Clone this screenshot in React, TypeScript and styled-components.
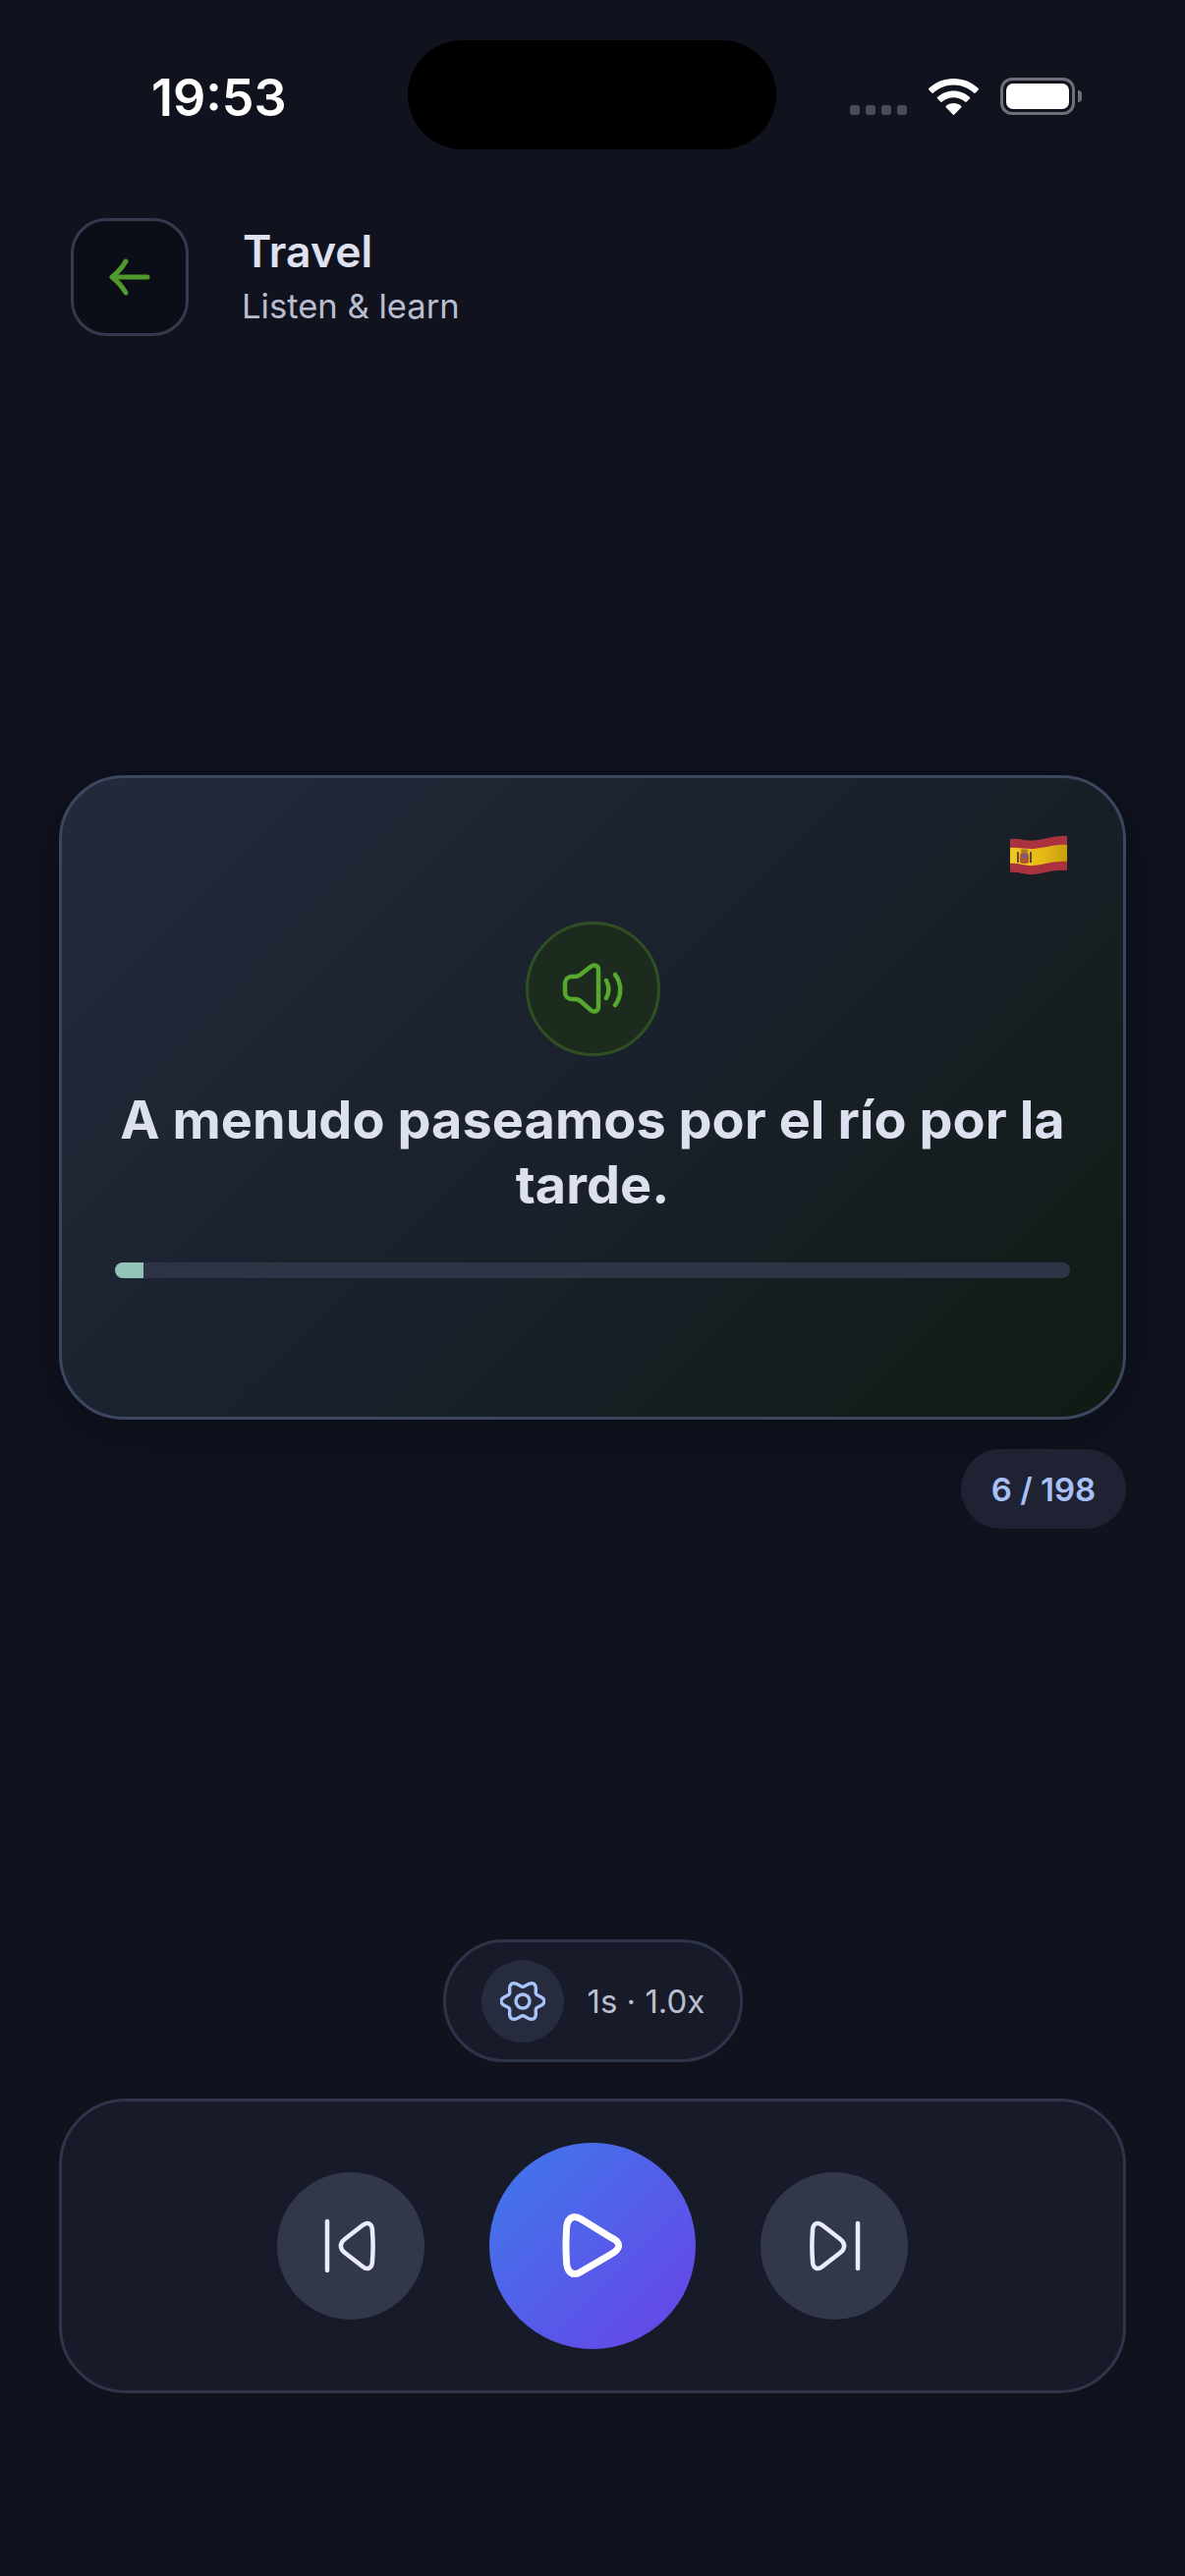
import { createGlobalStyle, styled } from "styled-components";

const GlobalStyle = createGlobalStyle`
  html, body {
    margin: 0;
    padding: 0;
    background: #10131e;
  }
  * { box-sizing: border-box; }
`;

const total = 198;
const current = 6;

// six soft lobes, a bit wider than tall
const gearPath =
  Array.from({ length: 144 }, (_, i) => {
    const a = (i / 144) * Math.PI * 2;
    const r = 18 + 3 * Math.cos(6 * a);
    const x = 23 + r * 1.05 * Math.cos(a);
    const y = 21 + r * 0.98 * Math.sin(a);
    return `${i === 0 ? "M" : "L"}${x.toFixed(2)} ${y.toFixed(2)}`;
  }).join(" ") + " Z";

export default function App() {
  return (
    <Screen>
      <GlobalStyle />
      <StatusBar>
        <Time>19:53</Time>
        <Island />
        <StatusIcons>
          <SignalDots>
            <Dot /><Dot /><Dot /><Dot />
          </SignalDots>
          <svg width="51" height="37" viewBox="0 0 51 37">
            <path fill="#fff" d="M25.5 0C15.8 0 7 3.7.4 9.8c-.5.5-.5 1.200 0 1.700l2.900 3c.5.5 1.200.5 1.700 0C10.400 9.500 17.600 6.500 25.500 6.500s15.100 3 20.500 8c.5.5 1.200.5 1.700 0l2.900-3c.5-.5.5-1.200 0-1.700C44 3.700 35.200 0 25.500 0Z" />
            <path fill="#fff" d="M25.500 12.500c-6.300 0-12 2.400-16.300 6.300-.5.5-.5 1.200 0 1.700l3 3c.5.5 1.200.5 1.700.1 3.100-2.700 7.200-4.400 11.600-4.400s8.500 1.700 11.600 4.400c.5.4 1.200.4 1.700-.1l3-3c.5-.5.5-1.200 0-1.700-4.300-3.900-10-6.300-16.300-6.300Z" />
            <path fill="#fff" d="M25.500 25c-2.900 0-5.500 1-7.600 2.800-.5.4-.5 1.100 0 1.600l6.800 7.200c.4.500 1.200.5 1.600 0l6.800-7.200c.5-.5.5-1.200 0-1.600-2.100-1.800-4.700-2.800-7.600-2.800Z" />
          </svg>
          <Battery>
            <BatteryLevel />
          </Battery>
        </StatusIcons>
      </StatusBar>

      <Header>
        <BackButton aria-label="Back">
          <svg width="42" height="38" viewBox="0 0 42 38" fill="none" stroke="#4f9a2c" strokeWidth="5" strokeLinecap="round" strokeLinejoin="round">
            <path d="M17 3C13 10 8 15 3 19c5 4 10 9 14 16" />
            <path d="M4 19h35" />
          </svg>
        </BackButton>
        <HeaderText>
          <Title>Travel</Title>
          <Subtitle>Listen &amp; learn</Subtitle>
        </HeaderText>
      </Header>

      <Card>
        <FlagRow>
          <svg width="58" height="42" viewBox="0 0 58 42">
            <defs>
              <linearGradient id="flagGold" x1="0" y1="0" x2="1" y2="0">
                <stop offset="0" stopColor="#efc622" />
                <stop offset="0.55" stopColor="#e6bb18" />
                <stop offset="1" stopColor="#c99d0c" />
              </linearGradient>
            </defs>
            <path fill="#a9323e" d="M0 4C8 3 16 6 24 5.500 34 5 46 0 58 1V36C46 35 34 39 24 40 16 41 8 37 0 38Z" />
            <path fill="url(#flagGold)" d="M0 13C8 12 16 14.500 24 14 34 13.500 46 9 58 10V27C46 26 34 30 24 31 16 32 8 28 0 29Z" />
            <rect x="7" y="17" width="2" height="11" fill="#5a4a38" />
            <rect x="20" y="17" width="2" height="11" fill="#5a4a38" />
            <rect x="10" y="18" width="9" height="11" rx="3" fill="#b2562a" />
            <rect x="12" y="19" width="5" height="5" rx="2" fill="#7c5a8e" />
            <rect x="11" y="14.500" width="7" height="3.500" rx="1" fill="#a67b26" />
          </svg>
        </FlagRow>
        <SoundBadge>
          <svg width="66" height="54" viewBox="0 0 66 54" fill="none" stroke="#56a82e" strokeWidth="4.500" strokeLinecap="round" strokeLinejoin="round">
            <path d="M5 21c0-4 3-7 7-7h3c3 0 5-1 7-3l9-7c4-3 8-1 8 3v38c0 4-4 6-8 3l-9-8c-2-2-4-3-7-3h-3c-4 0-7-3-7-7Z" />
            <path d="M47 18c3 5.500 3 12.500 0 18" />
            <path d="M56 12c7 9 7 22 0 31" />
          </svg>
        </SoundBadge>
        <Sentence>A menudo paseamos por el río por la tarde.</Sentence>
        <ProgressTrack>
          <ProgressFill style={{ width: `${(current / total) * 100}%` }} />
        </ProgressTrack>
      </Card>

      <CounterRow>
        <Counter>{current} / {total}</Counter>
      </CounterRow>

      <SettingsRow>
        <SettingsPill>
          <GearCircle>
            <svg width="46" height="42" viewBox="0 0 46 42" fill="none" stroke="#a8c4fa" strokeWidth="3.400" strokeLinejoin="round">
              <circle cx="23" cy="21" r="7" />
              <path d={gearPath} />
            </svg>
          </GearCircle>
          <SettingsLabel>1s · 1.0x</SettingsLabel>
        </SettingsPill>
      </SettingsRow>

      <ControlPanel>
        <SkipButton aria-label="Previous">
          <svg width="54" height="56" viewBox="0 0 54 56" fill="none" stroke="#e9ecfa" strokeWidth="4.500" strokeLinecap="round" strokeLinejoin="round">
            <path d="M3 3v50" />
            <path d="M49 13c0-8-5-10-10-6L21 21c-5.500 4-5.500 10 0 14l18 14c5 4 10 2 10-6 .8-10 .8-20 0-30Z" />
          </svg>
        </SkipButton>
        <PlayButton aria-label="Play">
          <svg width="68" height="72" viewBox="0 0 68 72" fill="none" stroke="#fff" strokeWidth="7" strokeLinecap="round" strokeLinejoin="round">
            <path d="M7.500 20C7.500 8 14 3.500 22 8.500L52 27c11.500 5 11.500 12 0 18L22 62.500C14 67.500 7.500 63 7.500 51c-.7-11-.7-20 0-31Z" />
          </svg>
        </PlayButton>
        <SkipButton aria-label="Next">
          <svg width="54" height="56" viewBox="0 0 54 56" fill="none" stroke="#e9ecfa" strokeWidth="4.500" strokeLinecap="round" strokeLinejoin="round">
            <path d="M51 5v46" />
            <path d="M5 13c0-8 5-10 10-6l18 14c5.500 4 5.500 10 0 14L15 49c-5 4-10 2-10-6-.8-10-.8-20 0-30Z" />
          </svg>
        </SkipButton>
      </ControlPanel>
    </Screen>
  );
}

const Screen = styled.div`
  width: 1206px;
  height: 2622px;
  background: #10131e;
  font-family: Inter, "Liberation Sans", sans-serif;
  overflow: hidden;
  display: flex;
  flex-direction: column;
`;

const StatusBar = styled.div`
  display: flex;
  align-items: center;
  height: 111px;
  margin-top: 41px;
  padding-left: 154px;
`;

const Time = styled.div`
  width: 261px;
  font-size: 52px;
  font-weight: 600;
  color: #fff;
  line-height: 1;
  padding-top: 6px;
`;

const Island = styled.div`
  width: 375px;
  height: 111px;
  background: #000;
  border-radius: 56px;
`;

const StatusIcons = styled.div`
  display: flex;
  align-items: flex-end;
  margin-left: 75px;
  height: 38px;
  margin-top: 2px;
`;

const SignalDots = styled.div`
  display: flex;
  gap: 6px;
  margin-right: 22px;
`;

const Dot = styled.span`
  width: 10px;
  height: 10px;
  border-radius: 3px;
  background: #4a4d58;
`;

const Battery = styled.div`
  position: relative;
  width: 76px;
  height: 38px;
  margin-left: 22px;
  padding: 3px;
  border: 3px solid #6e6f78;
  border-radius: 12px;
  &::after {
    content: "";
    position: absolute;
    right: -10px;
    top: 10px;
    width: 4px;
    height: 12px;
    border-radius: 0 4px 4px 0;
    background: #6e6f78;
  }
`;

const BatteryLevel = styled.div`
  width: 100%;
  height: 100%;
  border-radius: 7px;
  background: #fff;
`;

const Header = styled.div`
  display: flex;
  align-items: center;
  gap: 54px;
  margin-top: 70px;
  padding-left: 72px;
`;

const BackButton = styled.button`
  display: flex;
  align-items: center;
  justify-content: center;
  width: 120px;
  height: 120px;
  padding: 0;
  background: #0b0e16;
  border: 3px solid #343b50;
  border-radius: 36px;
`;

const HeaderText = styled.div`
  display: flex;
  flex-direction: column;
  gap: 8px;
  margin-top: -2px;
`;

const Title = styled.div`
  font-size: 44.500px;
  font-weight: 600;
  line-height: 52px;
  color: #dfe1f0;
  margin-left: 1px;
`;

const Subtitle = styled.div`
  font-size: 34.600px;
  font-weight: 400;
  line-height: 42px;
  color: #b9bdcf;
`;

const Card = styled.div`
  margin: 447px 60px 0;
  height: 656px;
  padding: 58px 57px 0;
  border: 3px solid #3c465f;
  border-radius: 66px;
  background: linear-gradient(135deg, #232a3b 0%, #1a212c 50%, #111a14 100%);
  box-shadow: 0 12px 60px rgba(4, 6, 16, 0.45);
  display: flex;
  flex-direction: column;
  align-items: center;
`;

const FlagRow = styled.div`
  align-self: flex-end;
  height: 42px;
  display: flex;
`;

const SoundBadge = styled.div`
  width: 137px;
  height: 137px;
  margin-top: 46px;
  border-radius: 50%;
  background: #1c2b1d;
  border: 3px solid #2e4f23;
  display: flex;
  align-items: center;
  justify-content: center;
`;

const Sentence = styled.div`
  margin-top: 32px;
  font-size: 54px;
  font-weight: 700;
  line-height: 66px;
  letter-spacing: 0.05px;
  text-align: center;
  color: #dde0ee;
`;

const ProgressTrack = styled.div`
  width: 972px;
  height: 16px;
  margin-top: 46px;
  border-radius: 8px;
  background: #2e3445;
  overflow: hidden;
  flex-shrink: 0;
`;

const ProgressFill = styled.div`
  height: 100%;
  background: #93c2b6;
`;

const CounterRow = styled.div`
  display: flex;
  justify-content: flex-end;
  margin-top: 30px;
  padding-right: 60px;
`;

const Counter = styled.div`
  width: 168px;
  height: 81px;
  border-radius: 41px;
  background: #1e2232;
  color: #a8c0f5;
  font-size: 33px;
  font-weight: 600;
  display: flex;
  align-items: center;
  justify-content: center;
`;

const SettingsRow = styled.div`
  display: flex;
  justify-content: center;
  margin-top: 418px;
`;

const SettingsPill = styled.div`
  width: 305px;
  height: 125px;
  border-radius: 63px;
  background: #171a28;
  border: 3px solid #2e3548;
  padding-left: 36px;
  display: flex;
  align-items: center;
  gap: 24px;
`;

const GearCircle = styled.div`
  width: 84px;
  height: 84px;
  border-radius: 50%;
  background: #272b3e;
  display: flex;
  align-items: center;
  justify-content: center;
`;

const SettingsLabel = styled.div`
  font-size: 33px;
  font-weight: 400;
  color: #b9bdcd;
`;

const ControlPanel = styled.div`
  margin: 37px 60px 0;
  height: 300px;
  border-radius: 68px;
  background: #171a28;
  border: 3px solid #30354a;
  display: flex;
  align-items: center;
  justify-content: center;
  gap: 66px;
`;

const SkipButton = styled.button`
  width: 150px;
  height: 150px;
  padding: 0;
  border: none;
  border-radius: 50%;
  background: #323749;
  display: flex;
  align-items: center;
  justify-content: center;
`;

const PlayButton = styled.button`
  width: 210px;
  height: 210px;
  padding: 0;
  border: none;
  border-radius: 50%;
  background: linear-gradient(135deg, #3d7aea 0%, #6a42e8 100%);
  display: flex;
  align-items: center;
  justify-content: center;
`;
